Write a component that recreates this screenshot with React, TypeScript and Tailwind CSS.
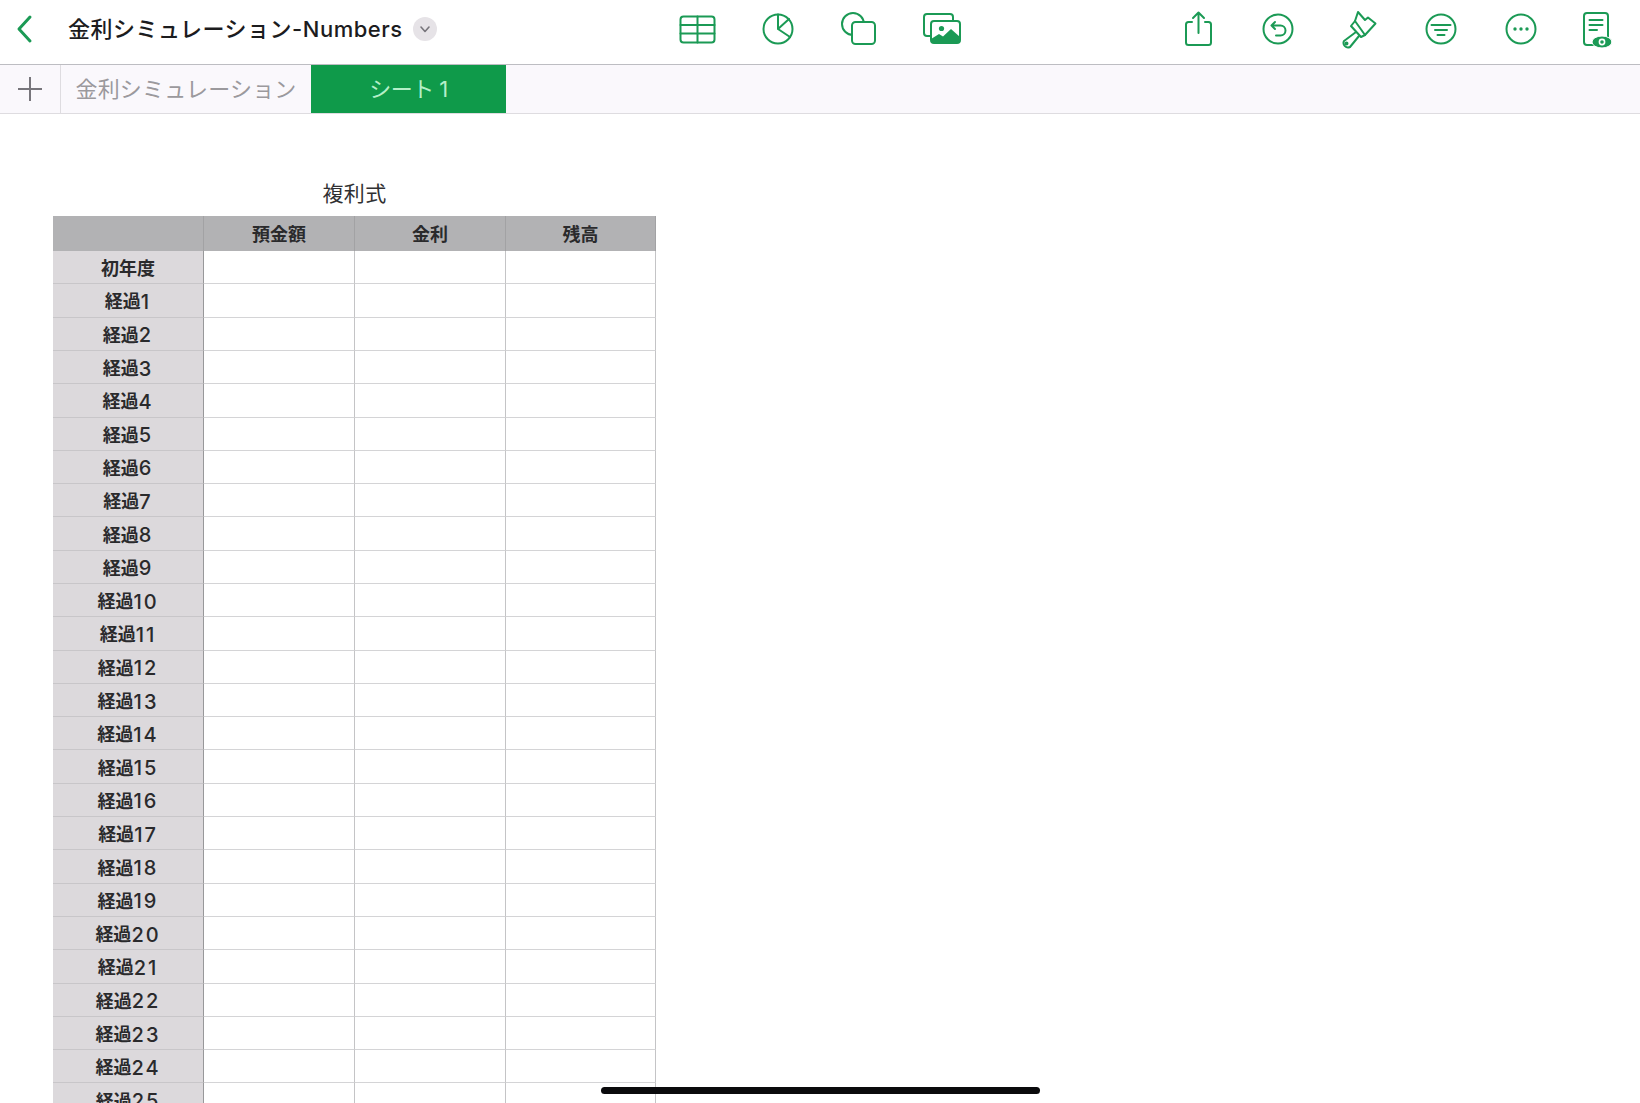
const GREEN = '#1b9a55'

const rowNumbers = Array.from({ length: 25 }, (_, i) => i + 1)

function Icon({ children, className = '' }: { children: React.ReactNode; className?: string }) {
  return (
    <svg
      viewBox="0 0 40 40"
      fill="none"
      stroke={GREEN}
      strokeWidth="2"
      strokeLinecap="round"
      strokeLinejoin="round"
      className={`h-10 w-10 shrink-0 ${className}`}
    >
      {children}
    </svg>
  )
}

function Toolbar() {
  return (
    <div className="flex h-[65px] items-center border-b border-[#bdbdc2] pb-[7px]">
      <div className="flex w-[678px] shrink-0 items-center">
        <svg viewBox="0 0 20 30" fill="none" stroke={GREEN} strokeWidth="3" strokeLinecap="round" strokeLinejoin="round" className="ml-[14px] h-[30px] w-5">
          <path d="M16 3 L5 15 L16 27" />
        </svg>
        <span className="ml-[34px] text-[22px] leading-none font-medium tracking-[0.5px] text-[#1c1c1e]">金利シミュレーション-Numbers</span>
        <span className="ml-2.5 flex h-6 w-6 items-center justify-center rounded-full bg-[#e6e3e7]">
          <svg viewBox="0 0 14 14" fill="none" stroke="#77757b" strokeWidth="1.6" strokeLinecap="round" strokeLinejoin="round" className="h-3.5 w-3.5">
            <path d="M3 5 L7 9.5 L11 5" />
          </svg>
        </span>
      </div>

      <div className="flex items-center">
        <Icon>
          <rect x="2.5" y="7.5" width="34" height="26" rx="3" />
          <path d="M2.5 16 H36.5 M2.5 24.5 H36.5 M19.5 7.5 V33.5" />
        </Icon>
        <Icon className="ml-10">
          <circle cx="20" cy="20" r="14.5" />
          <path d="M20 5.5 V20 L32 28 M20 20 L31 10" />
        </Icon>
        <Icon className="ml-10">
          <circle cx="15" cy="15" r="11" />
          <rect x="14" y="13" width="23" height="22" rx="3.5" fill="#fff" />
        </Icon>
        <Icon className="ml-11">
          <rect x="2" y="5" width="29" height="22" rx="3" />
          <rect x="9" y="12" width="29" height="22" rx="3" fill="#fff" />
          <circle cx="19.5" cy="19.5" r="2.6" fill={GREEN} stroke="none" />
          <path d="M9 30 L17 25 L21 27.5 L29 20 L38 28 V31 A3 3 0 0 1 35 34 H12 A3 3 0 0 1 9 31 Z" fill={GREEN} stroke="none" />
        </Icon>
      </div>

      <div className="ml-[216px] flex items-center">
        <Icon>
          <path d="M14 13 H10.5 A2.5 2.5 0 0 0 8 15.5 V33.5 A2.5 2.5 0 0 0 10.5 36 H30.5 A2.5 2.5 0 0 0 33 33.5 V15.5 A2.5 2.5 0 0 0 30.5 13 H27" />
          <path d="M20.5 24 V3.5 M15 9 L20.5 3.5 L26 9" />
        </Icon>
        <Icon className="ml-10">
          <circle cx="20" cy="20" r="14.5" />
          <path d="M17 13 L13.5 16.5 L17 20 M13.5 16.5 H22.5 A5 5 0 0 1 22.5 26.5 H18" />
        </Icon>
        <Icon className="ml-10">
          <path d="M17 12 L20 3 L27 11 L30 8.5 L37.5 14.5 L27 26 Z" />
          <path d="M17 12 L13 17 L23 28 L27 26" />
          <path d="M18 23 L6 32 A4.5 4.5 0 0 0 12 38 L21 27" />
          <circle cx="8.5" cy="34.5" r="1" />
        </Icon>
        <Icon className="ml-[43px]">
          <circle cx="20" cy="20" r="14.5" />
          <path d="M10.5 16 H29.5 M14 21 H26 M16.5 26 H23.5" />
        </Icon>
        <Icon className="ml-10">
          <circle cx="20" cy="20" r="14.5" />
          <circle cx="14" cy="20" r="1.7" fill={GREEN} stroke="none" />
          <circle cx="20" cy="20" r="1.7" fill={GREEN} stroke="none" />
          <circle cx="26" cy="20" r="1.7" fill={GREEN} stroke="none" />
        </Icon>
        <Icon className="ml-9">
          <rect x="7" y="4" width="24" height="32" rx="3" />
          <path d="M12.5 11 H25.5 M12.5 16 H25.5 M12.5 21 H20" />
          <ellipse cx="25" cy="33" rx="10" ry="6" fill={GREEN} stroke="#fff" strokeWidth="1" />
          <circle cx="25" cy="33" r="3.4" fill="#fff" stroke="none" />
          <circle cx="25" cy="33" r="1.8" fill={GREEN} stroke="none" />
        </Icon>
      </div>
    </div>
  )
}

function SheetTabs() {
  return (
    <div className="flex h-[49px] border-b border-[#dedce0] bg-[#faf8fc]">
      <div className="flex w-[61px] items-center justify-center border-r border-[#dedce0]">
        <svg viewBox="0 0 26 26" fill="none" stroke="#77757b" strokeWidth="2" className="h-[26px] w-[26px]">
          <path d="M13 1 V25 M1 13 H25" />
        </svg>
      </div>
      <div className="flex w-[250px] items-center justify-center text-[22px] leading-none tracking-[0.2px] text-[#9b999d]">金利シミュレーション</div>
      <div className="flex w-[195px] items-center justify-center bg-[#0f9a4a] text-[22px] leading-none tracking-[-0.5px] text-[#b4efc8]">シート 1</div>
    </div>
  )
}

function SheetTable() {
  const rowClass = 'grid grid-cols-[151px_151px_151px_150px]'
  return (
    <div className="ml-[53px] w-[603px]">
      <div className="mt-[65px] mb-[7px] text-center text-[21px] leading-[30px] tracking-[0.4px] text-[#303032]">複利式</div>
      <div className={`${rowClass} h-[35px] bg-[#b2b2b4] text-[18px] font-bold text-[#2a2a2c]`}>
        <div className="border-r border-[#a2a2a4]" />
        {['預金額', '金利', '残高'].map((h) => (
          <div key={h} className="flex items-center justify-center border-r border-[#a2a2a4] pt-0.5">{h}</div>
        ))}
      </div>
      <div className={`${rowClass} h-[33.33px]`}>
        <div className="flex items-center justify-center border-r border-b border-r-[#98989a] border-b-[#c8c6c9] bg-[#dcd9dc] pt-0.5 text-[18px] font-bold text-[#2a2a2c]">初年度</div>
        {[0, 1, 2].map((c) => (
          <div key={c} className="border-r border-b border-r-[#c4c4c6] border-b-[#d4d4d6]" />
        ))}
      </div>
      {rowNumbers.map((n) => (
        <div key={n} className={`${rowClass} h-[33.3px]`}>
          <div className="flex items-center justify-center border-r border-b border-r-[#98989a] border-b-[#c8c6c9] bg-[#dcd9dc] pt-[3px] text-[18px] font-bold text-[#2a2a2c]">
            経過<span className="text-[20px] leading-none font-medium tracking-[2px]">{n}</span>
          </div>
          {[0, 1, 2].map((c) => (
            <div key={c} className="border-r border-b border-r-[#c4c4c6] border-b-[#d4d4d6]" />
          ))}
        </div>
      ))}
    </div>
  )
}

export default function App() {
  return (
    <div className="relative h-[1103px] w-[1640px] overflow-hidden bg-white font-['Inter','Noto_Sans_CJK_JP',sans-serif]">
      <Toolbar />
      <SheetTabs />
      <SheetTable />
      <div className="absolute top-[1087px] left-[601px] h-[7px] w-[439px] rounded-full bg-[#0a0a0c]" />
    </div>
  )
}
